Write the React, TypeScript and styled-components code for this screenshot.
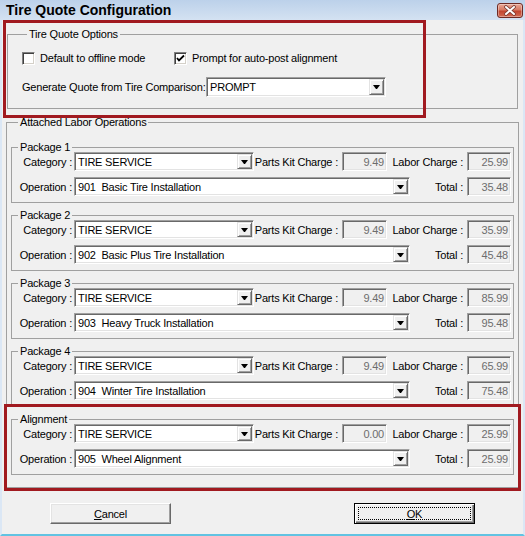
import React from "react";
import styled, { createGlobalStyle } from "styled-components";

type Pkg = {
  title: string;
  op: string;
  parts: string;
  labor: string;
  total: string;
};

const packages: Pkg[] = [
  { title: "Package 1", op: "901  Basic Tire Installation", parts: "9.49", labor: "25.99", total: "35.48" },
  { title: "Package 2", op: "902  Basic Plus Tire Installation", parts: "9.49", labor: "35.99", total: "45.48" },
  { title: "Package 3", op: "903  Heavy Truck Installation", parts: "9.49", labor: "85.99", total: "95.48" },
  { title: "Package 4", op: "904  Winter Tire Installation", parts: "9.49", labor: "65.99", total: "75.48" },
  { title: "Alignment", op: "905  Wheel Alignment", parts: "0.00", labor: "25.99", total: "25.99" },
];

function Combo({ text, width, height }: { text: string; width: number; height: number }) {
  return (
    <ComboBox $width={width} $height={height}>
      <ComboText>{text}</ComboText>
      <DropButton>
        <Arrow />
      </DropButton>
    </ComboBox>
  );
}

function App() {
  return (
    <>
      <GlobalStyle />
      <Window>
        <TitleBar>
          <Title>Tire Quote Configuration</Title>
          <CloseButton>
            <svg width="24" height="13" viewBox="0 0 24 13">
              <path d="M8 3 L16 10 M16 3 L8 10" stroke="#7a3b33" strokeWidth="3.6" strokeLinecap="round" />
              <path d="M8 3 L16 10 M16 3 L8 10" stroke="#ffffff" strokeWidth="2" strokeLinecap="round" />
            </svg>
          </CloseButton>
        </TitleBar>
        <Body>
          <OptionsGroup>
            <GroupTitle $lineHeight={13} $offset={5}>Tire Quote Options</GroupTitle>
            <CheckRow>
              <CheckItem $width={152}>
                <CheckBox />
                <span>Default to offline mode</span>
              </CheckItem>
              <CheckItem>
                <CheckBox>
                  <svg width="11" height="11" viewBox="0 0 11 11">
                    <path d="M2 5 L4 7.5 L9 2.5" stroke="#000" strokeWidth="1.8" fill="none" />
                  </svg>
                </CheckBox>
                <span>Prompt for auto-post alignment</span>
              </CheckItem>
            </CheckRow>
            <QuoteRow>
              <QuoteLabel>Generate Quote from Tire Comparison:</QuoteLabel>
              <Combo text="PROMPT" width={180} height={20} />
            </QuoteRow>
          </OptionsGroup>

          <LaborGroup>
            <GroupTitle $lineHeight={13} $offset={7}>Attached Labor Operations</GroupTitle>
            <PackageList>
              {packages.map((p) => (
                <PackageGroup key={p.title}>
                  <GroupTitle $lineHeight={9} $offset={6}>{p.title}</GroupTitle>
                  <PackageRow>
                    <RowLabel $width={62} $pad={2}>Category :</RowLabel>
                    <Combo text="TIRE SERVICE" width={180} height={19} />
                    <RowLabel $width={88} $pad={4}>Parts Kit Charge :</RowLabel>
                    <Amount $width={45}>{p.parts}</Amount>
                    <RowLabel $width={80} $pad={4}>Labor Charge :</RowLabel>
                    <Amount $width={44}>{p.labor}</Amount>
                  </PackageRow>
                  <PackageRow>
                    <RowLabel $width={62} $pad={2}>Operation :</RowLabel>
                    <Combo text={p.op} width={336} height={19} />
                    <RowLabel $width={57} $pad={4}>Total :</RowLabel>
                    <Amount $width={44}>{p.total}</Amount>
                  </PackageRow>
                </PackageGroup>
              ))}
            </PackageList>
          </LaborGroup>

          <ButtonRow>
            <DialogButton>
              <u>C</u>ancel
            </DialogButton>
            <DialogButton $primary>
              <u>O</u>K
            </DialogButton>
          </ButtonRow>
        </Body>

        <Highlight $left={3} $top={20} $width={423} $height={98} />
        <Highlight $left={4} $top={404} $width={517} $height={87} />
      </Window>
    </>
  );
}

const GlobalStyle = createGlobalStyle`
  html, body {
    margin: 0;
    padding: 0;
    background: #f0f0f0;
  }
  body {
    font-family: "Liberation Sans", Arial, sans-serif;
    font-size: 11px;
    letter-spacing: -0.2px;
    color: #000000;
  }
  * {
    box-sizing: border-box;
  }
`;

const Window = styled.div`
  position: relative;
  width: 525px;
  height: 536px;
  display: flex;
  flex-direction: column;
  background: #f0f0f0;
  overflow: hidden;
`;

const TitleBar = styled.div`
  height: 20px;
  flex: none;
  display: flex;
  align-items: center;
  justify-content: space-between;
  padding: 0 2px 0 6px;
  background: linear-gradient(to bottom, #bcd1ea, #d4e2f2);
`;

const Title = styled.div`
  font-family: "Liberation Sans", Arial, sans-serif;
  font-weight: 700;
  font-size: 14px;
  letter-spacing: 0;
  line-height: 20px;
  color: #000000;
`;

const CloseButton = styled.div`
  width: 26px;
  height: 15px;
  display: flex;
  align-items: center;
  justify-content: center;
  border: 1px solid #6e2a24;
  border-radius: 3px;
  background: linear-gradient(to bottom, #e9a897 0%, #d77a64 45%, #c2452f 55%, #d26b52 100%);
  box-shadow: inset 0 0 0 1px rgba(255, 255, 255, 0.35);
`;

const Body = styled.div`
  flex: 1;
  display: flex;
  flex-direction: column;
  padding: 8px 4px 0 4px;
  border-left: 2px solid #dbe7f5;
  border-right: 2px solid #dbe7f5;
  border-bottom: 2px solid #62c3e2;
`;

const Group = styled.fieldset`
  margin: 0;
  padding: 0;
  min-width: 0;
  border: 1px solid #a0a0a0;
`;

const GroupTitle = styled.legend<{ $lineHeight: number; $offset: number }>`
  margin-left: ${(p) => p.$offset}px;
  padding: 0 2px;
  line-height: ${(p) => p.$lineHeight}px;
  font-size: 11px;
  white-space: nowrap;
`;

const OptionsGroup = styled(Group)`
  margin: 0 1px;
  padding: 11px 0 11px 14px;
  display: flex;
  flex-direction: column;
  gap: 12px;
`;

const CheckRow = styled.div`
  height: 13px;
  display: flex;
  align-items: center;
`;

const CheckItem = styled.label<{ $width?: number }>`
  display: flex;
  align-items: center;
  gap: 5px;
  width: ${(p) => (p.$width ? `${p.$width}px` : "auto")};
  line-height: 13px;
  white-space: nowrap;
`;

const CheckBox = styled.span`
  width: 13px;
  height: 13px;
  flex: none;
  display: flex;
  align-items: center;
  justify-content: center;
  background: #ffffff;
  border: 1px solid;
  border-color: #808080 #ffffff #ffffff #808080;
  box-shadow: inset 1px 1px 0 #404040, inset -1px -1px 0 #d4d0c8;
`;

const QuoteRow = styled.div`
  display: flex;
  align-items: center;
  height: 20px;
`;

const QuoteLabel = styled.span`
  width: 184px;
  white-space: nowrap;
`;

const ComboBox = styled.div<{ $width: number; $height: number }>`
  width: ${(p) => p.$width}px;
  height: ${(p) => p.$height}px;
  flex: none;
  display: flex;
  padding: 1px;
  background: #ffffff;
  border: 1px solid;
  border-color: #a0a0a0 #ffffff #ffffff #a0a0a0;
  box-shadow: inset 1px 1px 0 #696969, inset -1px -1px 0 #e3e3e3;
`;

const ComboText = styled.span`
  flex: 1;
  padding-left: 2px;
  display: flex;
  align-items: center;
  white-space: pre;
  overflow: hidden;
`;

const DropButton = styled.span`
  width: 15px;
  flex: none;
  display: flex;
  align-items: center;
  justify-content: center;
  background: #f0f0f0;
  border: 1px solid;
  border-color: #e3e3e3 #696969 #696969 #e3e3e3;
  box-shadow: inset 1px 1px 0 #ffffff, inset -1px -1px 0 #a0a0a0;
`;

const Arrow = styled.span`
  width: 7px;
  height: 4px;
  border-left: 3px solid transparent;
  border-right: 3px solid transparent;
  border-top: 4px solid #000000;
`;

const LaborGroup = styled(Group)`
  margin-top: 7px;
  padding: 14px 4px 12px 4px;
`;

const PackageList = styled.div`
  display: flex;
  flex-direction: column;
  gap: 8px;
`;

const PackageGroup = styled(Group)`
  padding: 0 0 6px 0;
  display: flex;
  flex-direction: column;
  gap: 6px;
`;

const PackageRow = styled.div`
  height: 19px;
  display: flex;
  align-items: center;
`;

const RowLabel = styled.span<{ $width: number; $pad: number }>`
  width: ${(p) => p.$width}px;
  flex: none;
  padding-right: ${(p) => p.$pad}px;
  text-align: right;
  white-space: nowrap;
`;

const Amount = styled.span<{ $width: number }>`
  width: ${(p) => p.$width}px;
  height: 19px;
  flex: none;
  display: flex;
  align-items: center;
  justify-content: flex-end;
  padding-right: 2px;
  color: #6d6d6d;
  background: #f0f0f0;
  border: 1px solid;
  border-color: #a0a0a0 #ffffff #ffffff #a0a0a0;
  box-shadow: inset 1px 1px 0 #696969, inset -1px -1px 0 #e3e3e3;
`;

const ButtonRow = styled.div`
  display: flex;
  gap: 183px;
  margin-top: 15px;
  padding-left: 44px;
`;

const DialogButton = styled.button<{ $primary?: boolean }>`
  width: 121px;
  height: 21px;
  padding: 0;
  font-family: "Liberation Sans", Arial, sans-serif;
  font-size: 11px;
  letter-spacing: -0.2px;
  color: #000000;
  background: #f0f0f0;
  border: 1px solid;
  border-color: ${(p) => (p.$primary ? "#000000" : "#ffffff #696969 #696969 #ffffff")};
  box-shadow: ${(p) =>
    p.$primary
      ? "inset 1px 1px 0 #ffffff, inset -1px -1px 0 #696969, inset -2px -2px 0 #a0a0a0"
      : "inset -1px -1px 0 #a0a0a0, inset 1px 1px 0 #e3e3e3"};
  outline: ${(p) => (p.$primary ? "1px dotted #000000" : "none")};
  outline-offset: -5px;
  cursor: pointer;

  u {
    text-decoration: underline;
  }
`;

const Highlight = styled.div<{ $left: number; $top: number; $width: number; $height: number }>`
  position: absolute;
  left: ${(p) => p.$left}px;
  top: ${(p) => p.$top}px;
  width: ${(p) => p.$width}px;
  height: ${(p) => p.$height}px;
  border: 3px solid #a11a20;
  pointer-events: none;
`;

export default App;
